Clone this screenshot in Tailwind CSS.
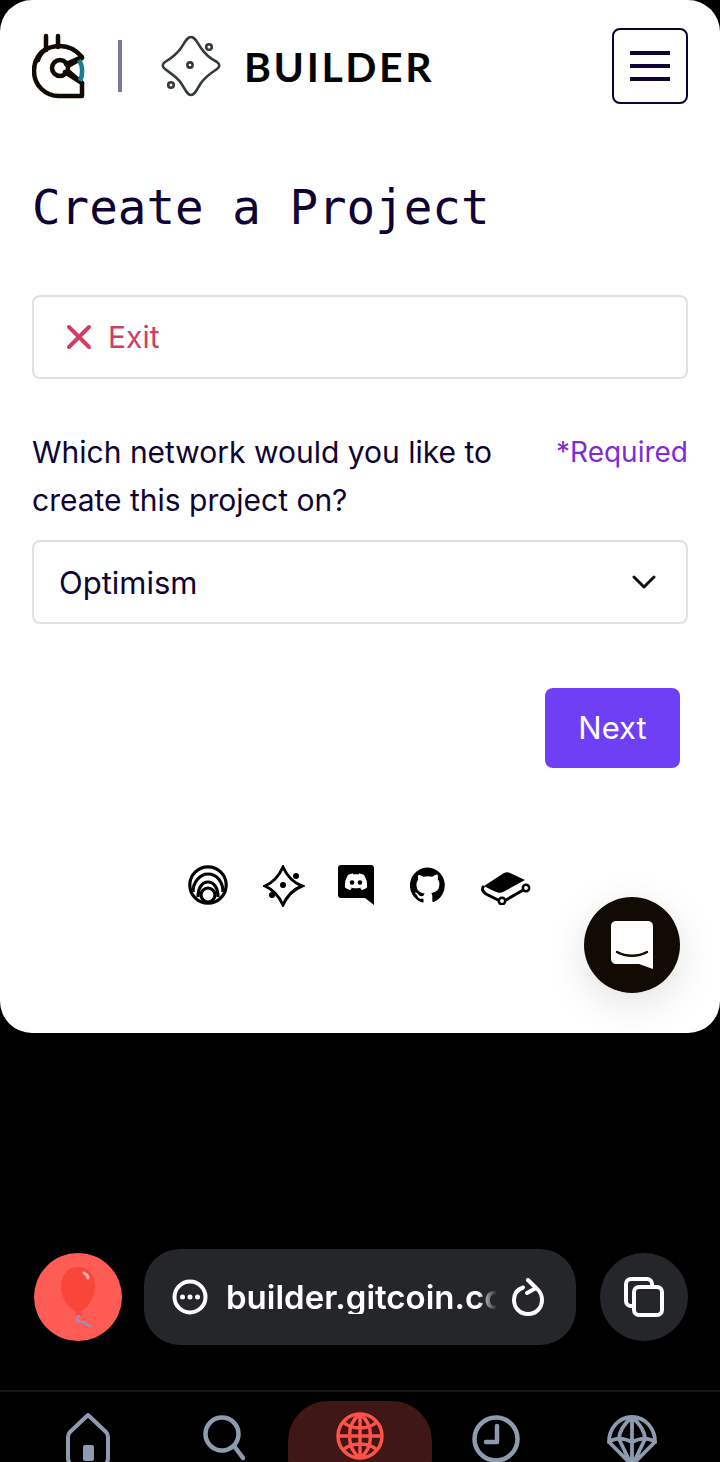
<!DOCTYPE html>
<html>
<head>
<meta charset="utf-8">
<script src="https://cdn.jsdelivr.net/npm/@tailwindcss/browser@4"></script>
</head>
<body class="bg-black">
<div class="relative w-[720px] h-[1462px] overflow-hidden bg-black font-['Inter',sans-serif]">
  <div class="relative h-[1033px] bg-white rounded-[32px] px-8">
    <header class="flex items-center justify-between h-[132px]">
      <div class="flex items-center">
        <svg width="54" height="66" viewBox="0 0 54 66" fill="none" class="block">
          <g stroke="#120b04" stroke-width="4.5" stroke-linecap="round" stroke-linejoin="round">
            <path d="M14 3V17M26 3V14"/>
            <path d="M6 27C9 17 18 13 28 13C37 13 44 17 50 24L34 31"/>
            <path d="M14 16C6 21 2 29 2 38C2 52 13 63 27 63H50V50L33 39"/>
            <circle cx="28" cy="35" r="8"/>
            <path d="M36 33L50 25M36 38L50 50"/>
          </g>
          <path d="M47 27C51 33 51 42 48 48" stroke="#17808a" stroke-width="4.5" fill="none"/>
        </svg>
        <div class="w-1 h-[52px] bg-[#7d7596] ml-[32px]"></div>
        <svg width="60" height="62" viewBox="0 0 60 62" fill="none" stroke="#333a3a" stroke-width="2.6" class="block ml-[39px]">
          <path d="M30 2C34 2 36 7 40 13C44 19 50 24 56 27C59 29 59 32 56 34C50 38 44 42 40 48C36 54 34 60 30 60C26 60 24 54 20 48C16 42 9 38 4 34C1 32 1 29 4 27C9 24 16 19 20 13C24 7 26 2 30 2Z"/>
          <circle cx="29" cy="30" r="2.6"/>
          <circle cx="48" cy="12" r="2.8"/>
          <circle cx="10" cy="50" r="2.8"/>
        </svg>
        <span class="ml-[23px] text-[41px] leading-none font-bold tracking-[2.6px] text-[#050505] font-['Lato',sans-serif]">BUILDER</span>
      </div>
      <button class="w-[76px] h-[76px] border-2 border-[#0e0333] rounded-lg flex flex-col items-center justify-center gap-[9px]">
        <span class="block w-10 h-1 bg-[#0e0333]"></span>
        <span class="block w-10 h-1 bg-[#0e0333]"></span>
        <span class="block w-10 h-1 bg-[#0e0333]"></span>
      </button>
    </header>
    <h1 class="mt-[40px] text-[47.5px] leading-[72px] text-[#0e0333] font-['DejaVu_Sans_Mono',monospace]">Create a Project</h1>
    <div class="mt-[51px] h-[84px] border-2 border-[#e2e0e7] rounded-lg flex items-center pl-[32px] gap-[16px]">
      <svg width="26" height="26" viewBox="0 0 26 26" fill="none" stroke="#d03e63" stroke-width="4" stroke-linecap="round"><path d="M3 3L23 23M23 3L3 23"/></svg>
      <span class="text-[30px] text-[#d03e63] leading-none">Exit</span>
    </div>
    <div class="mt-[49px] flex justify-between items-start text-[30px] leading-[48px] text-[#0e0333]">
      <p class="w-[480px]">Which network would you like to create this project on?</p>
      <span class="text-[#7e2bdc] text-[28px]">*Required</span>
    </div>
    <div class="mt-4 h-[84px] border-2 border-[#e2e0e7] rounded-lg flex items-center justify-between pl-[25px] pr-[30px]">
      <span class="text-[31px] text-[#0e0333] leading-none">Optimism</span>
      <svg width="24" height="14" viewBox="0 0 24 14" fill="none" stroke="#111" stroke-width="3" stroke-linecap="round" stroke-linejoin="round"><path d="M2 2L12 12L22 2"/></svg>
    </div>
    <div class="mt-16 flex justify-end pr-2">
      <button class="w-[135px] h-20 rounded-lg bg-[#6f3ff5] text-white text-[31px]">Next</button>
    </div>
    <div class="mt-[97px] flex items-start justify-center gap-[39px] pr-[1px] text-black">
      <svg width="40" height="40" viewBox="0 0 40 40" fill="none" stroke="#000" stroke-width="3.2"><circle cx="20" cy="20" r="18.2"/><path d="M5 27C5 17 12 9 20 9C29 9 35 17 35 27"/><path d="M10 32C10 23 14 17 20 17C26 17 30 23 30 32"/><circle cx="20" cy="30" r="7"/></svg>
      <svg width="42" height="42" viewBox="0 0 42 42" fill="none" stroke="#000" stroke-width="3" class="-ml-1"><path d="M20 2C24 11 29 17 39 21C29 25 24 31 20 40C16 31 11 25 2 21C11 17 16 11 20 2Z"/><circle cx="20" cy="20" r="1.5" fill="#000"/><circle cx="33" cy="11" r="1.5" fill="#000"/><circle cx="9" cy="30" r="1.5" fill="#000"/></svg>
      <svg width="36" height="40" viewBox="0 0 36 40" class="-ml-[6px]"><path d="M3 0H33C34.700 0 36 1.300 36 3V40L27 33H3C1.300 33 0 31.700 0 30V3C0 1.300 1.300 0 3 0Z" fill="#000"/><path d="M10 10C12 9 14 8.500 15 8.500L15.500 9.500C17 9.200 19 9.200 20.500 9.500L21 8.500C22 8.500 24 9 26 10C28.500 14 29.500 18 29 22.500C27 24 25 24.800 23.500 25L22.300 23C23 22.800 23.800 22.400 24.500 22C21 23.700 15 23.700 11.500 22C12.200 22.400 13 22.800 13.700 23L12.500 25C11 24.800 9 24 7 22.500C6.500 18 7.500 14 10 10Z" fill="#fff"/><circle cx="14" cy="17.500" r="2.300" fill="#000"/><circle cx="22" cy="17.500" r="2.300" fill="#000"/></svg>
      <svg width="36" height="36" viewBox="0 0 24 24" class="-ml-[3px] mt-[2px]" fill="#000"><path d="M12 .3a12 12 0 0 0-3.800 23.400c.6.1.8-.3.8-.6v-2c-3.300.7-4-1.600-4-1.600-.6-1.400-1.400-1.800-1.400-1.800-1-.7.1-.7.1-.7 1.200.1 1.800 1.200 1.800 1.200 1 1.800 2.800 1.300 3.500 1 .1-.8.400-1.300.8-1.600-2.700-.3-5.500-1.300-5.500-5.900 0-1.300.5-2.400 1.200-3.200-.1-.3-.5-1.500.1-3.200 0 0 1-.3 3.300 1.200a11.500 11.500 0 0 1 6 0C17.300 4.700 18.300 5 18.300 5c.7 1.700.3 2.900.1 3.200.8.800 1.200 1.900 1.200 3.200 0 4.600-2.800 5.600-5.500 5.900.4.400.8 1.100.8 2.200v3.300c0 .3.200.7.800.6A12 12 0 0 0 12 .3z"/></svg>
      <svg width="50" height="36" viewBox="0 0 50 36" class="-ml-[4px] mt-[4px]"><path d="M3 17L23 4C25 3 27 3 29 4L44 11L22 23C18 25 14 23 3 17Z" fill="#000"/><path d="M3 17C0 20 2 23 5 25L19 32C21 33 23 32 25 31L44 20" fill="none" stroke="#000" stroke-width="3"/><circle cx="21" cy="32" r="3.200" fill="#fff" stroke="#000" stroke-width="2.500"/><circle cx="45" cy="19" r="3.200" fill="#fff" stroke="#000" stroke-width="2.500"/></svg>
    </div>
    <div class="absolute left-[584px] top-[897px] w-24 h-24 rounded-full bg-[#120b04] flex items-center justify-center shadow-[0_10px_40px_rgba(0,0,0,0.12)]">
      <svg width="42" height="48" viewBox="0 0 42 48"><path d="M5 0H37C39.800 0 42 2.200 42 5V48L28 43H5C2.200 43 0 40.800 0 38V5C0 2.200 2.200 0 5 0Z" fill="#fff"/><path d="M6 31C15 36 27 36 36 31" fill="none" stroke="#120b04" stroke-width="2.500" stroke-linecap="round"/></svg>
    </div>
  </div>
  <div class="mt-[216px] flex items-center pl-[34px]">
    <div class="w-[88px] h-[88px] rounded-full bg-[#ff5c55] flex items-center justify-center">
      <svg width="44" height="70" viewBox="0 0 44 70" class="mt-[6px]"><path d="M22 2C33 2 39 11 39 22C39 34 30 44 24 47L26 50H19L20.500 47C14 44 5 34 5 22C5 11 11 2 22 2Z" fill="#f9453a"/><path d="M28 8C30 9 32 11 32 13" stroke="#ffb1a8" stroke-width="3" stroke-linecap="round" fill="none"/><path d="M23 50L21 55C24 59 27 55 29 58C31 61 34 60 36 62" stroke="#6aa9e4" stroke-width="1.500" fill="none"/></svg>
    </div>
    <div class="ml-[22px] w-[432px] h-24 rounded-[36px] bg-[#25262a] flex items-center pl-[28px] pr-[28px]">
      <svg width="36" height="36" viewBox="0 0 36 36" fill="none"><circle cx="18" cy="18" r="15.500" stroke="#fff" stroke-width="4"/><circle cx="10.500" cy="18" r="2.500" fill="#fff"/><circle cx="18" cy="18" r="2.500" fill="#fff"/><circle cx="25.500" cy="18" r="2.500" fill="#fff"/></svg>
      <span class="ml-[18px] w-[271px] overflow-hidden whitespace-nowrap text-[33px] font-semibold text-white leading-none [mask-image:linear-gradient(to_right,#000_93%,transparent)]">builder.gitcoin.co</span>
      <svg width="34" height="38" viewBox="0 0 34 38" fill="none" stroke="#fff" stroke-width="4" stroke-linecap="round" stroke-linejoin="round" class="ml-[15px]"><path d="M11 9.500C4 12 2 17 2 22C2 30 8 36 16 36C24 36 30 30 30 22C30 17 28 13 24 10"/><path d="M16 2L24 10L15 15"/></svg>
    </div>
    <div class="ml-[24px] w-[88px] h-[88px] rounded-full bg-[#25262a] flex items-center justify-center">
      <svg width="40" height="40" viewBox="0 0 40 40" fill="none" stroke="#fff" stroke-width="4" stroke-linejoin="round"><rect x="2" y="2" width="26" height="27" rx="5"/><rect x="10" y="10" width="28" height="28" rx="5" fill="#25262a"/></svg>
    </div>
  </div>
  <div class="mt-[45px] border-t-2 border-[#16171a] h-[76px] relative">
    <div class="absolute left-[288px] top-[9px] w-[144px] h-[96px] rounded-[40px] bg-[#3f1716]"></div>
    <svg class="absolute left-[66px] top-[20px]" width="44" height="56" viewBox="0 0 44 56" fill="none" stroke="#8d9bb0" stroke-width="4" stroke-linejoin="round"><path d="M22 3L40 20C41.500 21.500 42 23 42 25V46C42 50 40 53 36 53H8C4 53 2 50 2 46V25C2 23 2.500 21.500 4 20Z"/><rect x="17" y="33" width="11" height="16" rx="2" fill="#8d9bb0" stroke="none"/></svg>
    <svg class="absolute left-[203px] top-[23px]" width="42" height="46" viewBox="0 0 42 46" fill="none" stroke="#8d9bb0" stroke-width="4.500" stroke-linecap="round"><circle cx="19" cy="19" r="16.500"/><path d="M31 31L40 43"/></svg>
    <svg class="absolute left-[336px] top-[20px]" width="48" height="48" viewBox="0 0 48 48" fill="none" stroke="#ff5249" stroke-width="3.500"><circle cx="24" cy="24" r="22"/><path d="M24 2V46M2 24H46M7 10C16 18 32 18 41 10M7 38C16 30 32 30 41 38"/><path d="M24 2C10 12 10 36 24 46M24 2C38 12 38 36 24 46"/></svg>
    <svg class="absolute left-[472px] top-[23px]" width="48" height="48" viewBox="0 0 48 48" fill="none" stroke="#8d9bb0" stroke-width="4.500" stroke-linecap="round" stroke-linejoin="round"><circle cx="24" cy="24" r="21.500"/><path d="M25 11V27H14"/></svg>
    <svg class="absolute left-[606px] top-[22px]" width="52" height="56" viewBox="0 0 52 56" fill="none" stroke="#8d9bb0" stroke-width="3.800" stroke-linecap="round" stroke-linejoin="round"><path d="M3 28C3 14 13 3 26 3C39 3 49 14 49 28C42 23 34 24 26 28C18 24 10 23 3 28Z"/><path d="M26 3C18 10 13 18 13 25M26 3C34 10 39 18 39 25M26 3V28"/><path d="M3 28L23 48M49 28L29 48M13 25L24 48M39 25L28 48M26 28V48"/><circle cx="26" cy="50" r="4" fill="#8d9bb0"/></svg>
  </div>
</div>
</body>
</html>
